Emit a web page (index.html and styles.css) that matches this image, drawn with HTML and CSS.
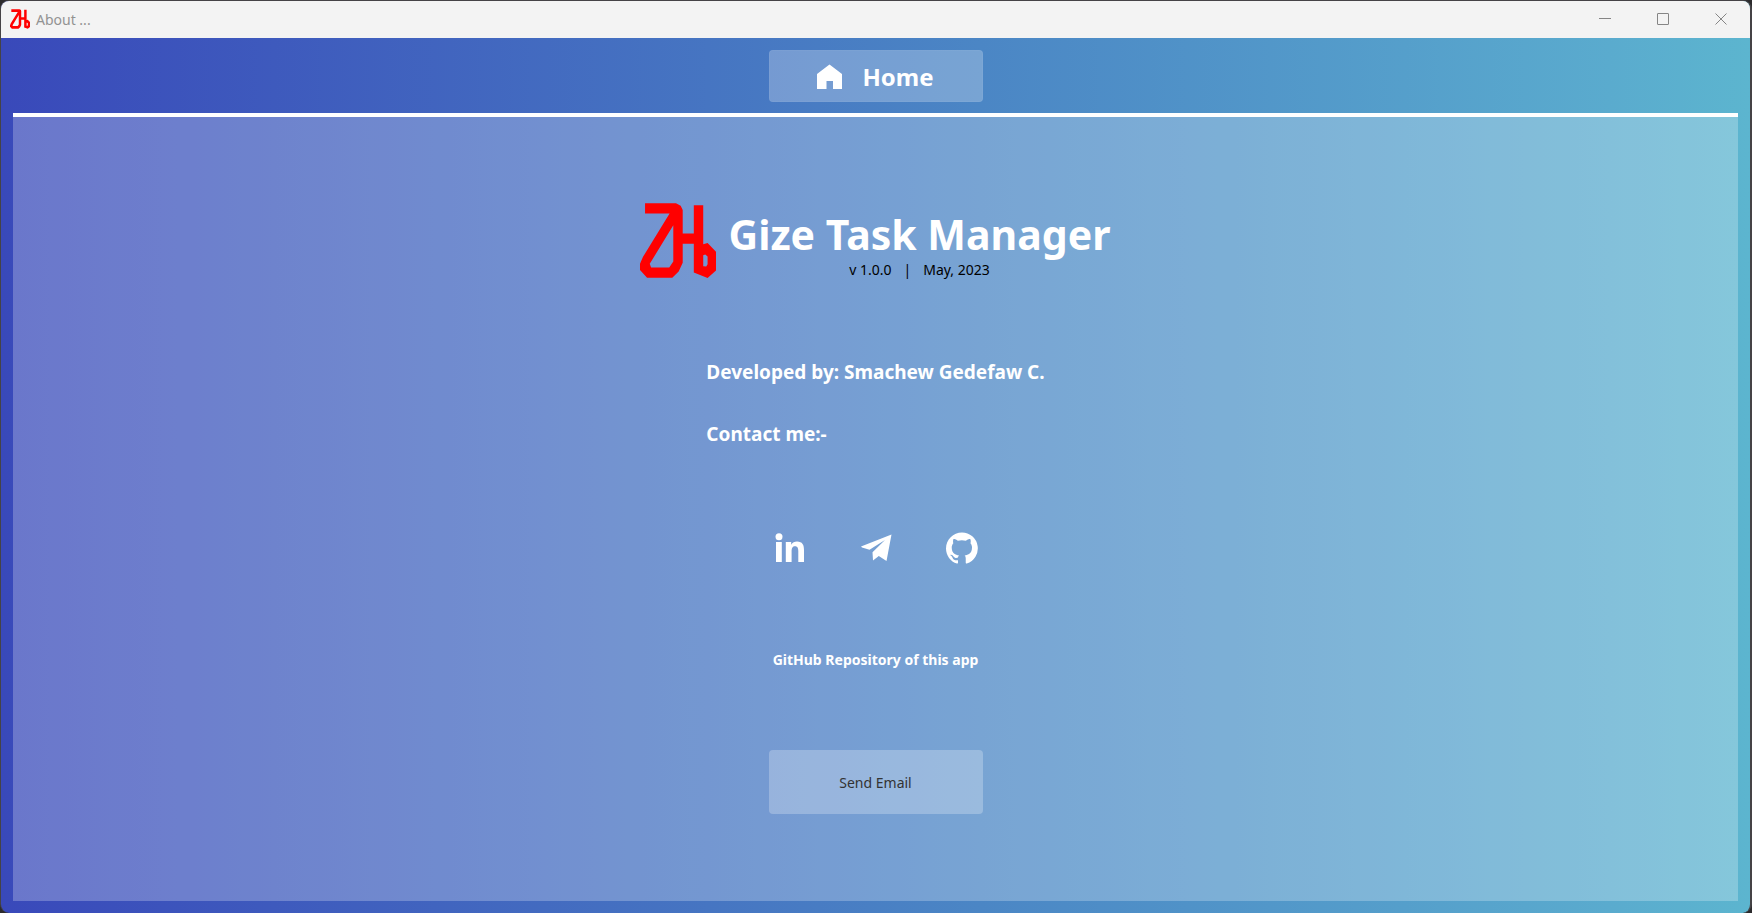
FILE: index.html
```html
<!DOCTYPE html>
<html lang="en">
<head>
<meta charset="utf-8">
<title>About ...</title>
<link rel="stylesheet" href="styles.css">
</head>
<body>
<svg class="sprite" aria-hidden="true">
  <symbol id="logo" viewBox="39 29 226 223">
    <path fill="#f00" fill-rule="evenodd" d="M54 30H146L160 37L166 50V120H199V36H227V152L240 148L265 174V230L240 252L199 236V150H166V207L154 233L135 251H60L39 228V210L48 189L127 60H54ZM138 95L68 210L72 221H126L138 203ZM227 184V217L236 218L240 211V188L233 182Z"/>
  </symbol>
</svg>
<div class="window">
  <header class="titlebar">
    <svg class="titlebar-logo" aria-hidden="true"><use href="#logo"/></svg>
    <span class="titlebar-text">About ...</span>
    <div class="window-buttons">
      <button type="button" class="window-button" aria-label="Minimize"><svg viewBox="0 0 12 12"><path d="M0 5.5H12"/></svg></button>
      <button type="button" class="window-button" aria-label="Maximize"><svg viewBox="0 0 12 12"><rect x=".5" y=".5" width="11" height="11" rx=".3"/></svg></button>
      <button type="button" class="window-button" aria-label="Close"><svg viewBox="0 0 12 12"><path d="M.5.5L11.5 11.5M11.5.5L.5 11.5"/></svg></button>
    </div>
  </header>
  <nav class="toolbar">
    <button type="button" class="home-button">
      <svg class="home-icon" viewBox="0 0 25 25" aria-hidden="true"><path fill="#fff" d="M0 10L12.500 .5L25 10V25H16V17H9.500V25H0Z"/></svg>
      Home
    </button>
  </nav>
  <main class="panel">
    <section class="brand">
      <svg class="brand-logo" aria-hidden="true"><use href="#logo"/></svg>
      <div class="brand-text">
        <h1 class="brand-name">Gize Task Manager</h1>
        <p class="brand-version"><span>v 1.0.0</span><span>|</span><span>May, 2023</span></p>
      </div>
    </section>
    <section class="author">
      <p class="author-line">Developed by: Smachew Gedefaw C.</p>
      <p class="author-line">Contact me:-</p>
    </section>
    <div class="social">
      <a class="social-link" href="#linkedin" aria-label="LinkedIn"><svg viewBox="0 0 32 32"><g fill="#fff"><circle cx="5" cy="4.700" r="3.500"/><path d="M2 10H7.800V30H2ZM11.800 10H17.200V12.700C18.500 10.500 20.500 9.500 23 9.500C28.500 9.500 30 13 30 18V30H24.300V19.500C24.300 16.500 23.700 14.300 21.100 14.300C18.400 14.300 17.600 16.400 17.600 19.200V30H11.800Z"/></g></svg></a>
      <a class="social-link" href="#telegram" aria-label="Telegram"><svg viewBox="0 0 32 32"><path fill="#fff" d="M1 14.600L31.500 2.500L26.500 29L18.800 24L13 28.500L12.500 20.300L25 8L9.500 17.800L2 15.600Z"/></svg></a>
      <a class="social-link" href="#github" aria-label="GitHub"><svg viewBox="0 0 24 24"><path fill="#fff" d="M12 .3C5.400.3 0 5.700 0 12.300c0 5.300 3.400 9.800 8.200 11.400.6.100.8-.3.800-.6v-2c-3.300.7-4-1.600-4-1.600-.6-1.400-1.400-1.800-1.400-1.800-1.100-.7.100-.7.100-.7 1.200.1 1.800 1.200 1.800 1.200 1.100 1.800 2.800 1.300 3.500 1 .1-.8.400-1.300.8-1.600-2.700-.3-5.500-1.300-5.500-5.900 0-1.300.5-2.400 1.200-3.200-.1-.3-.5-1.500.1-3.200 0 0 1-.3 3.300 1.200a11.500 11.500 0 0 1 6 0C17.200 5 18.200 5.300 18.200 5.300c.7 1.700.2 2.900.1 3.200.8.800 1.200 1.900 1.200 3.200 0 4.600-2.800 5.600-5.500 5.900.4.400.8 1.100.8 2.200v3.300c0 .3.200.7.800.6A12 12 0 0 0 12 .3"/></svg></a>
    </div>
    <a class="repo-link" href="#repository">GitHub Repository of this app</a>
    <button type="button" class="email-button">Send Email</button>
  </main>
</div>
</body>
</html>
```
FILE: styles.css
```css
* {
  box-sizing: border-box;
}

body {
  margin: 0;
  background: #2c2b2d;
  font-family: "Segoe UI", "Noto Sans", "Open Sans", sans-serif;
}

h1,
p {
  margin: 0;
}

button {
  border: 0;
  font-family: inherit;
  cursor: pointer;
}

.sprite {
  display: none;
}

.window {
  display: flex;
  flex-direction: column;
  min-height: 100vh;
  border: 1px solid #454346;
  border-width: 1px 2px 0 1px;
  border-radius: 9px;
  overflow: hidden;
  background: linear-gradient(90deg, #3949ba 0%, #4b86c5 56%, #5aabce 92%, #5cb5cf 100%);
}

.titlebar {
  display: flex;
  align-items: center;
  height: 37px;
  padding-bottom: 1px;
  padding-left: 9px;
  gap: 6px;
  background: #f3f3f3;
}

.titlebar-logo {
  width: 20px;
  height: 20px;
}

.titlebar-text {
  color: #929292;
  font-size: 14px;
}

.window-buttons {
  display: flex;
  margin-left: auto;
}

.window-button {
  display: grid;
  place-items: center;
  width: 58px;
  height: 36px;
  background: transparent;
}

.window-button svg {
  width: 12px;
  height: 12px;
  fill: none;
  stroke: #858585;
}

.toolbar {
  display: flex;
  justify-content: center;
  padding: 12px;
  height: 75px;
}

.home-button {
  display: flex;
  align-items: center;
  justify-content: center;
  gap: 20px;
  width: 214px;
  height: 52px;
  padding: 0;
  border: 1px solid rgba(255, 255, 255, 0.04);
  border-radius: 4px;
  background: rgba(255, 255, 255, 0.25);
  color: #fff;
  font-size: 24px;
  font-weight: 700;
}

.home-icon {
  width: 25px;
  height: 25px;
}

.panel {
  display: flex;
  flex: 1;
  flex-direction: column;
  align-items: center;
  margin: 0 12px 12px;
  padding: 86px 20px;
  border-top: 4px solid #fff;
  background: rgba(255, 255, 255, 0.25);
}

.brand {
  display: flex;
  align-items: flex-end;
  gap: 12px;
}

.brand-logo {
  width: 76px;
  height: 75px;
}

.brand-text {
  display: flex;
  flex-direction: column;
  align-items: center;
}

.brand-name {
  color: #fff;
  font-size: 41px;
  line-height: 56px;
}

.brand-version {
  display: flex;
  gap: 12px;
  color: #000;
  font-size: 14px;
  line-height: 16px;
}

.author {
  display: grid;
  gap: 38px;
  margin-top: 82px;
}

.author-line {
  color: #fff;
  font-size: 19px;
  font-weight: 700;
  line-height: 24px;
}

.social {
  display: flex;
  gap: 54px;
  margin-top: 86px;
}

.social-link,
.social-link svg {
  display: block;
  width: 32px;
  height: 32px;
}

.repo-link {
  margin-top: 86px;
  color: #fff;
  font-size: 14px;
  font-weight: 700;
  line-height: 20px;
  text-decoration: none;
}

.email-button {
  width: 214px;
  height: 64px;
  margin-top: 80px;
  border-radius: 4px;
  background: rgba(255, 255, 255, 0.25);
  color: #333;
  font-size: 14px;
}
```
